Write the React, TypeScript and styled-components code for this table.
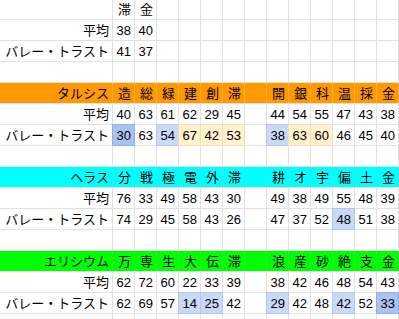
import { FC, Fragment } from 'react'
import styled, { createGlobalStyle } from 'styled-components'

type Tone = 'blue' | 'pale' | 'cream'

type Section = {
  name: string
  color?: { bg: string; line: string }
  heads: string[]
  avg: (number | null)[]
  team: (number | null)[]
  tones?: Record<number, Tone>
}

const TONES: Record<Tone, { bg: string; line: string }> = {
  blue: { bg: '#a9c3f1', line: '#92afe2' },
  pale: { bg: '#c9daf8', line: '#b3c7ec' },
  cream: { bg: '#fff2cc', line: '#efdfb4' },
}

const COLS = 13

const sections: Section[] = [
  {
    name: '',
    heads: ['滞', '金'],
    avg: [38, 40],
    team: [41, 37],
  },
  {
    name: 'タルシス',
    color: { bg: '#ff9900', line: '#f5ad47' },
    heads: ['造', '総', '緑', '建', '創', '滞', '', '開', '銀', '科', '温', '採', '金'],
    avg: [40, 63, 61, 62, 29, 45, null, 44, 54, 55, 47, 43, 38],
    team: [30, 63, 54, 67, 42, 53, null, 38, 63, 60, 46, 45, 40],
    tones: { 0: 'blue', 2: 'pale', 3: 'cream', 4: 'cream', 5: 'cream', 7: 'pale', 8: 'cream', 9: 'cream' },
  },
  {
    name: 'ヘラス',
    color: { bg: '#00ffff', line: '#3ae6e6' },
    heads: ['分', '戦', '極', '電', '外', '滞', '', '耕', 'オ', '宇', '偏', '土', '金'],
    avg: [76, 33, 49, 58, 43, 30, null, 49, 38, 49, 55, 48, 39],
    team: [74, 29, 45, 58, 43, 26, null, 47, 37, 52, 48, 51, 38],
    tones: { 10: 'pale' },
  },
  {
    name: 'エリシウム',
    color: { bg: '#00ff00', line: '#3ae03a' },
    heads: ['万', '専', '生', '大', '伝', '滞', '', '浪', '産', '砂', '絶', '支', '金'],
    avg: [62, 72, 60, 22, 33, 39, null, 38, 42, 46, 48, 54, 43],
    team: [62, 69, 57, 14, 25, 42, null, 29, 42, 48, 42, 52, 33],
    tones: { 3: 'pale', 4: 'pale', 7: 'pale', 10: 'pale', 12: 'blue' },
  },
]

const pad = <T,>(list: T[], empty: T) =>
  Array.from({ length: COLS + 1 }, (_, i) => (i < list.length ? list[i] : empty))

const GlobalStyle = createGlobalStyle`
  html, body {
    margin: 0;
    padding: 0;
    background: #fff;
    overflow: hidden;
  }
  body {
    font-family: "Liberation Sans", Arial, "Noto Sans CJK JP", sans-serif;
    font-size: 13px;
    color: #000;
  }
`

const Viewport = styled.div`
  width: 399px;
  height: 319px;
  overflow: hidden;
`

const Sheet = styled.div`
  display: grid;
  grid-template-columns: 112px repeat(${COLS}, 21px) 40px;
  grid-template-rows: 19px;
  grid-auto-rows: 20px;
  gap: 1px;
  width: 460px;
  background: #e1e1e1;
`

const Cell = styled.div<{ $bg?: string; $line?: string; $ring?: boolean }>`
  background: ${(p) => p.$bg ?? '#fff'};
  box-shadow: ${(p) =>
    p.$line ? (p.$ring ? `0 0 0 1px ${p.$line}` : `1px 0 0 ${p.$line}`) : 'none'};
  padding-right: 3px;
  text-align: right;
  line-height: 21px;
  white-space: nowrap;
  overflow: hidden;
`

const TopCell = styled(Cell)`
  line-height: 19px;
`

type RowProps = {
  label: string
  values: (string | number | null)[]
  color?: { bg: string; line: string }
  tones?: Record<number, Tone>
  top?: boolean
}

const Row: FC<RowProps> = ({ label, values, color, tones, top }) => {
  const C = top ? TopCell : Cell
  return (
    <>
      <C $bg={color?.bg} $line={color?.line}>
        {label}
      </C>
      {pad(values, null).map((v, i) => {
        const tone = tones?.[i] ? TONES[tones[i]] : undefined
        return (
          <C
            key={i}
            $bg={tone?.bg ?? color?.bg}
            $line={tone?.line ?? color?.line}
            $ring={!!tone}
          >
            {v ?? ''}
          </C>
        )
      })}
    </>
  )
}

const Blank: FC = () => <Row label="" values={[]} />

export default function App() {
  return (
    <Viewport>
      <GlobalStyle />
      <Sheet>
        {sections.map((s, i) => (
          <Fragment key={s.name || i}>
            <Row label={s.name} values={s.heads} color={s.color} top={i === 0} />
            <Row label="平均" values={s.avg} />
            <Row label="バレー・トラスト" values={s.team} tones={s.tones} />
            <Blank />
          </Fragment>
        ))}
      </Sheet>
    </Viewport>
  )
}
